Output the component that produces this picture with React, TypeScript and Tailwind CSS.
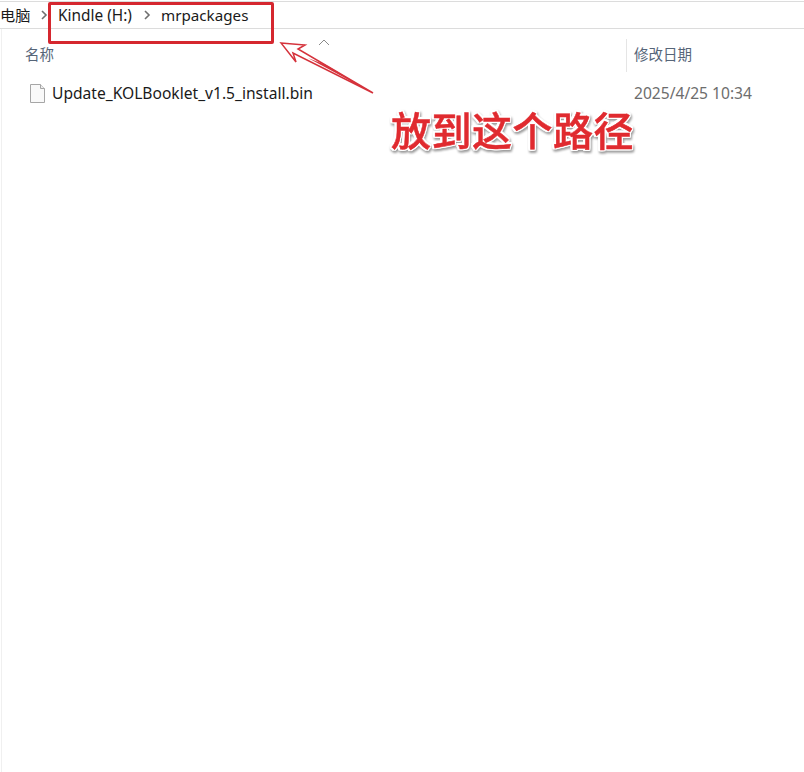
import React from "react"

const FONT = "font-['Noto_Sans','Noto_Sans_CJK_SC',sans-serif]"

function Chevron() {
    return (
        <svg width="8" height="10" viewBox="0 0 8 10" fill="none" className="shrink-0">
            <path d="M2 1l4 4-4 4" stroke="#6f6f6f" strokeWidth="1.6" />
        </svg>
    )
}

function FileIcon() {
    return (
        <svg width="15" height="19" viewBox="0 0 15 19" fill="none" className="shrink-0">
            <path d="M.5.5h10l4 4v14H.5z" fill="#f9f9f9" stroke="#a6a6a6" />
            <path d="M10.5.5v4h4" fill="#ededed" stroke="#a6a6a6" />
        </svg>
    )
}

function Arrow() {
    return (
        <svg width="100" height="62" viewBox="0 0 100 62" fill="none" className="absolute left-[278px] top-[38px]">
            <path
                d="M3 5L27 7L20 11L95 55L15 15L18 24Z"
                fill="#fff"
                stroke="#d5333c"
                strokeWidth="1.5"
                strokeLinejoin="miter"
            />
            <path d="M30 20L95 55L48 27Z" fill="#d5333c" />
        </svg>
    )
}

export default function App() {
    return (
        <div className={`relative h-[772px] w-[804px] overflow-hidden bg-white ${FONT}`}>
            {/* address bar */}
            <div className="mt-px flex h-[28px] items-center border-y border-[#dcdcdc] text-[15.2px] leading-[28px] text-[#1a1a1a]">
                <span className="w-[40px]">电脑</span>
                <Chevron />
                <span className="ml-[10px] w-[77px] pt-px text-[15.4px]">Kindle (H:)</span>
                <span className="ml-[8px]"><Chevron /></span>
                <span className="ml-[10px]">mrpackages</span>
            </div>

            {/* file list */}
            <div className="ml-px h-[743px] border-l border-[#f0f0f0]">
                <div className="relative flex h-[53px] text-[14.5px] text-[#566578]">
                    <span className="ml-[23px] mt-[15px]">名称</span>
                    <svg width="12" height="7" viewBox="0 0 12 7" fill="none" className="absolute left-[316px] top-[10px]">
                        <path d="M1 6l5-5 5 5" stroke="#8a8a8a" />
                    </svg>
                    <div className="absolute left-[624px] top-[10px] h-[33px] border-l border-[#e5e5e5] pl-[7px] pt-[5px]">修改日期</div>
                </div>
                <div className="flex h-[24px] items-center">
                    <div className="ml-[28px] flex w-[604px] items-center gap-[7px] text-[15.6px] text-[#1a1a1a]">
                        <FileIcon />
                        <span>Update_KOLBooklet_v1.5_install.bin</span>
                    </div>
                    <span className="text-[15.6px] text-[#6d6d6d]">2025/4/25 10:34</span>
                </div>
            </div>

            {/* annotations */}
            <div className="absolute left-[48px] top-[2px] h-[42px] w-[226px] rounded-[2px] border-[3px] border-[#d5272f]" />
            <Arrow />
            <div className="absolute left-[391px] top-[99px] text-[40px] font-medium leading-[60px] tracking-[0.5px] text-[#e02a2f] font-['Noto_Sans_CJK_SC',sans-serif] [-webkit-text-stroke:0.5px_#e02a2f] [filter:drop-shadow(1.5px_0_0_#fff)_drop-shadow(-1.5px_0_0_#fff)_drop-shadow(0_1.5px_0_#fff)_drop-shadow(0_-1.5px_0_#fff)_drop-shadow(1px_2px_1px_#9a9a9a)]">
                放到这个路径
            </div>
        </div>
    )
}
